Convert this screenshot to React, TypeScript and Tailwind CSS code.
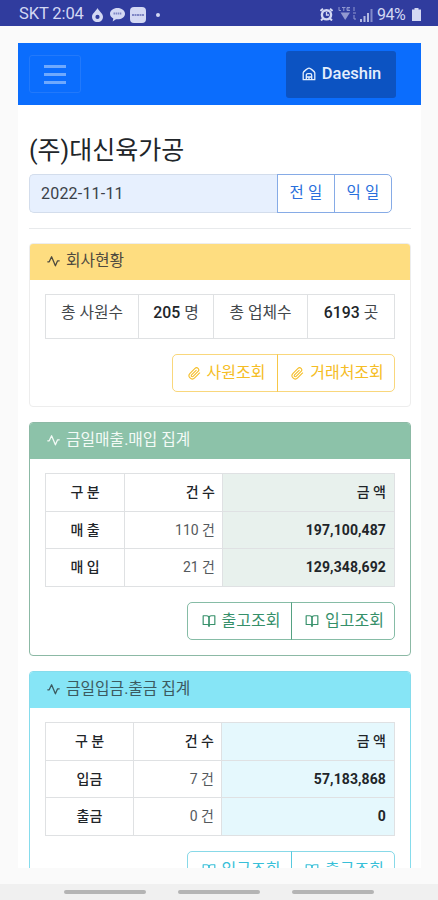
import React from 'react';
import { FiBookOpen, FiPaperclip } from 'react-icons/fi';

const StatusBar: React.FC = () => (
  <header className="h-[26px] shrink-0 bg-[#303c9e] flex items-center justify-between pl-[19px] pr-[17px] pt-[3px] text-[#d3d8f3]">
    <div className="flex items-center">
      <span className="text-[16.5px] leading-none w-[73px] whitespace-nowrap tracking-[-0.1px]">SKT 2:04</span>
      <svg width="11" height="14" viewBox="0 0 11 14" fill="currentColor">
        <path fillRule="evenodd" d="M5.5 0C6.5 3 11 5 11 9a5.3 5 0 0 1-11 0C0 5 4.500 3 5.500 0zM5.500 6.800a2.100 2.100 0 1 0 0 4.200a2.100 2.100 0 0 0 0-4.200z" />
      </svg>
      <svg className="ml-[7px]" width="15" height="14" viewBox="0 0 15 14" fill="currentColor">
        <path d="M7.500 0C3.400 0 0 2.500 0 5.700c0 2 1.300 3.700 3.300 4.700L2.700 13.500 6 11.200c5 .6 9-2 9-5.500C15 2.500 11.600 0 7.500 0z" />
        <path d="M3.500 5.500h8" stroke="#7f86c4" strokeWidth="2" strokeDasharray="1.500 .6" />
      </svg>
      <svg className="ml-[5px]" width="16" height="16" viewBox="0 0 16 16" fill="currentColor">
        <rect width="16" height="16" rx="4" />
        <path d="M2 8h12" stroke="#7f86c4" strokeWidth="2" strokeDasharray="2 .5" />
      </svg>
      <span className="ml-2.5 w-1 h-1 rounded-full bg-current" />
    </div>
    <div className="flex items-center">
      <svg width="13" height="13" viewBox="0 0 13 13" fill="none" stroke="currentColor">
        <circle cx="6.500" cy="6.800" r="4.600" strokeWidth="2.400" />
        <path d="M6.500 4v3h2.500" strokeWidth="1.300" />
        <path d="M.5 3 3 .8M12.500 3 10 .8M1 12.500l2-2M12 12.500l-2-2" strokeWidth="2" />
      </svg>
      <svg className="ml-[5px]" width="19" height="15" viewBox="0 0 19 15" fill="none" stroke="currentColor" opacity=".6">
        <path d="M1 0v3.500h2M4 .5h3.500M5.800.5v3.500M12 .5H9v3h3M9 2h2.500M16 0v4M15 6h3M16 8v4l2 0" />
        <path d="M2.500 5.500h9.500L7.200 13z" fill="currentColor" stroke="none" />
      </svg>
      <svg className="ml-[3px]" width="13" height="14" viewBox="0 0 13 14" fill="currentColor">
        <path opacity=".8" d="M0 11h2v3H0zM3.500 8h2v6h-2zM7 5h2v9H7z" />
        <path opacity=".5" d="M10.500 1h2v13h-2z" />
      </svg>
      <span className="ml-[4px] w-[32px] text-[16px] leading-none tracking-[-0.5px]">94%</span>
      <svg className="ml-[3px]" width="9" height="13" viewBox="0 0 9 13" fill="currentColor">
        <path d="M2.500 0h4v1.500H9V13H0V1.500h2.500z" />
      </svg>
    </div>
  </header>
);

const Navbar: React.FC = () => (
  <nav className="h-[62px] bg-[#0b6dfd] flex items-center justify-between pl-[11px] pr-[25px]">
    <button className="w-[52px] h-[38px] border border-[#2279fb] rounded-[3px] flex flex-col items-center justify-center gap-[5px]">
      <span className="w-[22px] h-[3px] bg-[#6fa9fd]" />
      <span className="w-[22px] h-[3px] bg-[#6fa9fd]" />
      <span className="w-[22px] h-[3px] bg-[#6fa9fd]" />
    </button>
    <button className="w-[110px] h-[47px] rounded-[3px] bg-[#0c53c2] text-[#e4eefc] flex items-center justify-center gap-[6px] pl-px">
      <svg width="14" height="14" viewBox="0 0 14 14" fill="none" stroke="currentColor" strokeWidth="1.300" strokeLinejoin="round">
        <path d="M1.200 12.700V5.800C1.200 4.800 5.500 1.200 7 1.200s5.800 3.600 5.800 4.600v6.900z" />
        <path d="M4.300 12.500V8.200c0-1 .8-1.500 1.500-1.500h2.400c.7 0 1.500.5 1.500 1.500v4.300M4.300 10h5.400M7 10v2.500" />
      </svg>
      <span className="text-[16.5px] font-medium leading-none">Daeshin</span>
    </button>
  </nav>
);

const PulseIcon: React.FC = () => (
  <svg
    width="13"
    height="13"
    viewBox="0 0 13 13"
    fill="none"
    stroke="currentColor"
    strokeWidth="1.300"
    strokeLinecap="round"
    strokeLinejoin="round"
  >
    <path d="M.8 6.800h1.400L4.600 1.800 8.400 10.800 10.600 5.800h1.600" />
  </svg>
);

type ActionProps = { labels: string[]; icon: React.ReactNode; widths: string[]; tone: string };

const Actions: React.FC<ActionProps> = ({ labels, icon, widths, tone }) => (
  <div className={`mt-[15px] flex justify-end ${tone}`}>
    {labels.map((label, i) => (
      <button
        key={label}
        className={`h-[38px] border border-current/60 flex items-center justify-center gap-[6px] pl-[3px] ${widths[i]} ${i === 0 ? 'rounded-l-[5px]' : 'rounded-r-[5px] -ml-px'}`}
      >
        {icon}
        <span className="text-[16px] leading-none whitespace-nowrap">{label}</span>
      </button>
    ))}
  </div>
);

type CardProps = { title: string; border: string; header: string; height: string; children: React.ReactNode };

const Card: React.FC<CardProps> = ({ title, border, header, height, children }) => (
  <section className={`mb-[15px] border rounded-[4px] overflow-hidden shrink-0 ${border} ${height}`}>
    <h2 className={`h-[36px] pl-[17px] pb-[2px] flex items-center gap-[6px] text-[15.8px] ${header}`}>
      <PulseIcon />
      <span className="leading-none">{title}</span>
    </h2>
    <div className="px-[15px] pt-[14px]">{children}</div>
  </section>
);

type SummaryProps = { rows: string[][]; cols: string; tint: string };

const SummaryTable: React.FC<SummaryProps> = ({ rows, cols, tint }) => (
  <div className="border-t border-l border-[#dfe1e3] text-[14px] text-[#212529]">
    {rows.map(([name, count, amount], i) => (
      <div key={name} className={`grid h-[37.5px] ${cols}`}>
        <div className="border-r border-b border-[#dfe1e3] flex items-center justify-center font-medium pt-px">{name}</div>
        <div className={`border-r border-b border-[#dfe1e3] flex items-center justify-end pt-px pr-[7px] ${i === 0 ? 'font-medium' : 'text-[#55595d]'}`}>
          {count}
        </div>
        <div className={`border-r border-b border-[#dfe1e3] flex items-center justify-end pt-px pr-[8px] ${tint} ${i === 0 ? 'font-medium' : 'font-bold tracking-[0.1px]'}`}>
          {amount}
        </div>
      </div>
    ))}
  </div>
);

const App: React.FC = () => {
  return (
    <div className="w-[438px] h-[900px] overflow-hidden flex flex-col bg-[#fafafa] font-[Roboto,'Noto_Sans_CJK_KR',sans-serif]">
      <StatusBar />

      <main className="mt-[17px] ml-[18px] w-[403px] h-[825px] shrink-0 overflow-hidden bg-white">
        <Navbar />

        <div className="pl-[11px] pr-[10px] flex flex-col">
          <h1 className="mt-[27px] h-[42px] pt-[1px] text-[25px] leading-[36px] text-[#212529]">(주)대신육가공</h1>
          <div className="flex w-[363px] h-[39px] text-[16px]">
            <div className="flex-1 bg-[#e7f0fe] border border-r-0 border-[#d3ddec] rounded-l-[5px] pl-[11px] flex items-center text-[#3b4148] tracking-[0.2px]">
              2022-11-11
            </div>
            <button className="w-[58px] border border-[#86abe6] text-[#2a6fdc] text-[15.5px] tracking-[0.2px]">전 일</button>
            <button className="w-[58px] -ml-px border border-[#86abe6] rounded-r-[5px] text-[#2a6fdc] text-[15.5px] tracking-[0.2px]">익 일</button>
          </div>
          <hr className="mt-[15px] mb-[14px] border-[#e8eaec]" />

          {/* 회사현황 */}
          <Card title="회사현황" border="border-[#ededed]" header="bg-[#fedd80] text-[#4e4a3f]" height="h-[164px]">
            <div className="grid grid-cols-[93px_75px_94px_87px] h-[45px] border border-r-0 border-[#dfe1e3] text-[15.8px] leading-[24px] text-[#43474b]">
              <div className="border-r border-[#dfe1e3] pt-[6px] text-center">총 사원수</div>
              <div className="border-r border-[#dfe1e3] pt-[6px] text-center"><b className="font-medium text-[#212529]">205</b> 명</div>
              <div className="border-r border-[#dfe1e3] pt-[6px] text-center">총 업체수</div>
              <div className="border-r border-[#dfe1e3] pt-[6px] text-center"><b className="font-medium text-[#212529]">6193</b> 곳</div>
            </div>
            <Actions labels={['사원조회', '거래처조회']} icon={<FiPaperclip size={13} />} widths={['w-[106px]', 'w-[118px]']} tone="text-[#f5bd25]" />
          </Card>

          {/* 금일매출.매입 집계 */}
          <Card title="금일매출.매입 집계" border="border-[#8cb9a5]" header="bg-[#8cc2a9] text-[#f3faf6]" height="h-[234px]">
            <SummaryTable
              rows={[['구 분', '건 수', '금 액'], ['매 출', '110 건', '197,100,487'], ['매 입', '21 건', '129,348,692']]}
              cols="grid-cols-[79px_98px_172px]"
              tint="bg-[#e8f1ed]"
            />
            <Actions labels={['출고조회', '입고조회']} icon={<FiBookOpen size={14} />} widths={['w-[105px]', 'w-[104px]']} tone="text-[#36906a]" />
          </Card>

          {/* 금일입금.출금 집계 */}
          <Card title="금일입금.출금 집계" border="border-[#86dcec]" header="bg-[#86e5f6] text-[#3c5a60]" height="h-[234px]">
            <SummaryTable
              rows={[['구 분', '건 수', '금 액'], ['입금', '7 건', '57,183,868'], ['출금', '0 건', '0']]}
              cols="grid-cols-[88px_88px_173px]"
              tint="bg-[#e5f8fd]"
            />
            <Actions labels={['입금조회', '출금조회']} icon={<FiBookOpen size={14} />} widths={['w-[105px]', 'w-[104px]']} tone="text-[#38bfd8]" />
          </Card>
        </div>
      </main>

      <footer className="mt-auto h-[16px] shrink-0 bg-[#f0f0f0] flex items-center justify-center gap-[32px]">
        <span className="w-[82px] h-[4px] rounded-full bg-[#b4b4b4]" />
        <span className="w-[82px] h-[4px] rounded-full bg-[#b4b4b4]" />
        <span className="w-[82px] h-[4px] rounded-full bg-[#b4b4b4]" />
      </footer>
    </div>
  );
};

export default App;
